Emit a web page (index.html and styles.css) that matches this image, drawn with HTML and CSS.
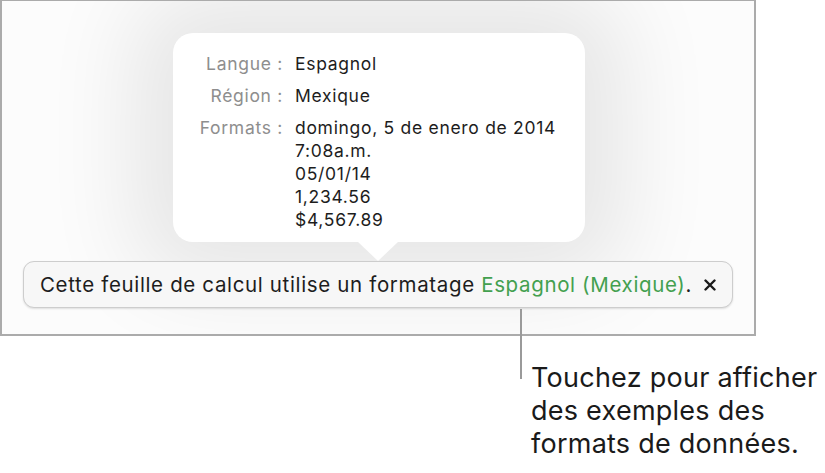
FILE: index.html
```html
<!DOCTYPE html>
<html lang="fr">
<head>
    <meta charset="UTF-8">
    <meta name="viewport" content="width=device-width, initial-scale=1.0">
    <title>Formatage de la feuille</title>
    <link rel="stylesheet" href="styles.css">
</head>
<body>
    <div class="frame">
        <div class="popover">
            <div class="label">Langue :</div>
            <div class="value">Espagnol</div>
            <div class="label">Région :</div>
            <div class="value">Mexique</div>
            <div class="label">Formats :</div>
            <div class="value">
                domingo, 5 de enero de 2014<br>
                7:08a.m.<br>
                05/01/14<br>
                1,234.56<br>
                $4,567.89
            </div>
        </div>
        <div class="notice">
            <span class="notice-text">Cette feuille de calcul utilise un formatage <span class="locale">Espagnol (Mexique)</span>.</span>
            <span class="close">
                <svg width="12" height="12" viewBox="0 0 12 12">
                    <path d="M1.5 1.5 L10.5 10.5 M10.5 1.5 L1.5 10.5" stroke="#1a1a1a" stroke-width="2.4" stroke-linecap="round"/>
                </svg>
            </span>
        </div>
    </div>
    <div class="callout">
        Touchez pour afficher<br>
        des exemples des<br>
        formats de données.
    </div>
</body>
</html>
```

FILE: styles.css
```css
* {
    box-sizing: border-box;
    margin: 0;
    padding: 0;
}

body {
    font-family: 'Inter', 'Liberation Sans', sans-serif;
    background-color: #ffffff;
    color: #1d1d1d;
    width: 825px;
}

.frame {
    width: 756px;
    height: 336px;
    border: 2px solid #ababab;
    border-top-width: 1px;
    background-color: #fcfcfc;
    overflow: hidden;
    padding-top: 32px;
}

.popover {
    position: relative;
    margin-left: 171px;
    width: 412px;
    height: 209px;
    background-color: #ffffff;
    border-radius: 20px;
    box-shadow: 0 0 90px 40px rgba(0, 0, 0, 0.09);
    display: grid;
    grid-template-columns: 110px 1fr;
    column-gap: 12px;
    row-gap: 9px;
    align-content: start;
    padding-top: 19px;
    font-size: 17.5px;
    line-height: 23px;
    letter-spacing: 0.7px;
}

.popover::after {
    content: '';
    position: absolute;
    top: 100%;
    left: 185px;
    border-left: 20px solid transparent;
    border-right: 20px solid transparent;
    border-top: 19px solid #ffffff;
}

.label {
    text-align: right;
    color: #8e8e8e;
}

.notice {
    position: relative;
    margin-top: 19px;
    margin-left: 21px;
    width: 710px;
    height: 47px;
    background-color: #f7f7f7;
    border: 1px solid #cdcdcd;
    border-radius: 11px;
    box-shadow: 0 1px 2px rgba(0, 0, 0, 0.12);
    display: flex;
    align-items: center;
    justify-content: space-between;
    padding: 0 16px 0 16px;
    font-size: 20.5px;
    letter-spacing: 0.65px;
}

.locale {
    color: #43a04f;
}

.close {
    display: flex;
    align-items: center;
}

.callout {
    position: relative;
    margin-left: 531px;
    margin-top: 25px;
    font-size: 27px;
    line-height: 33px;
    letter-spacing: 0.25px;
    color: #1a1a1a;
}

.callout::before {
    content: '';
    position: absolute;
    left: -11px;
    top: -52px;
    width: 2px;
    height: 70px;
    background-color: #9a9a9a;
}
```
